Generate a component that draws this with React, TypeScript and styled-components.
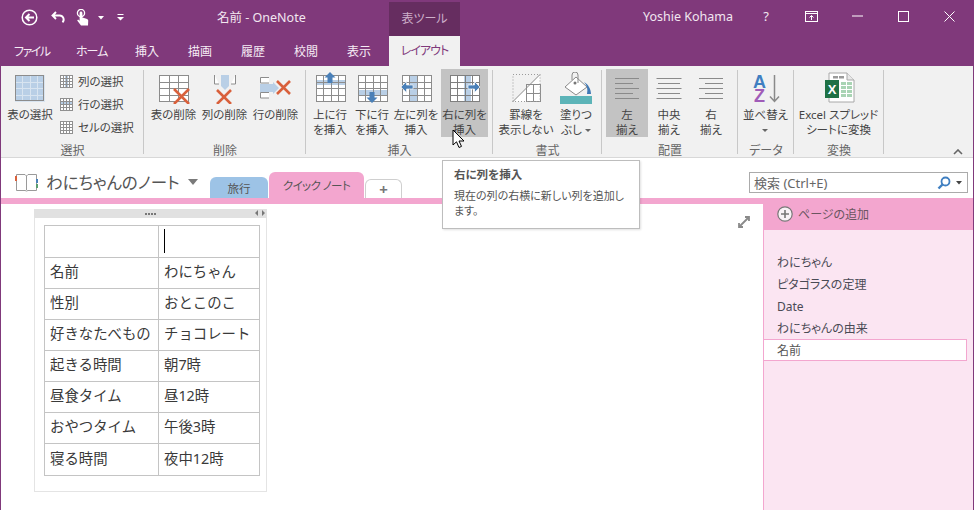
import React from "react";
import styled, { createGlobalStyle } from "styled-components";

const Global = createGlobalStyle`
  html, body { margin: 0; padding: 0; background: #fff; overflow: hidden; }
  * { box-sizing: border-box; }
`;

const PURPLE = "#80397b";
const PINK = "#f3a6cf";
const UI = `"Noto Sans", "Noto Sans CJK JP", sans-serif`;

const Win = styled.div`
  position: relative;
  width: 974px;
  height: 510px;
  border-left: 1px solid ${PURPLE};
  border-right: 1px solid ${PURPLE};
  font-family: ${UI};
  font-feature-settings: "palt";
  color: #444;
  overflow: hidden;
  display: flex;
  flex-direction: column;
`;
const TitleBar = styled.div`
  height: 38px;
  background: ${PURPLE};
  display: flex;
  align-items: center;
  padding-bottom: 6px;
  color: #f2e6f0;
  font-size: 12.5px;
`;
const Qat = styled.div`
  width: 216px;
  margin-top: 3px;
  padding-left: 20px;
  display: flex;
  align-items: center;
  gap: 9px;
`;
const TitleText = styled.div`
  width: 172px;
  font-size: 12.5px;
  white-space: nowrap;
`;
const ContextTab = styled.div`
  width: 71px;
  height: 36px;
  margin: 2px 0 -6px;
  padding-bottom: 4px;
  background: #662d60;
  color: #cdb0ca;
  display: flex;
  align-items: center;
  justify-content: center;
  font-size: 12px;
`;
const UserName = styled.div`
  margin-left: 183px;
  width: 100px;
  white-space: nowrap;
  font-size: 12.5px;
`;
const WinButtons = styled.div`
  display: flex;
  align-items: center;
`;
const WinBtn = styled.div<{ $w: number }>`
  width: ${(p) => p.$w}px;
  display: flex;
  justify-content: center;
  align-items: center;
  font-size: 13px;
`;
const TabBar = styled.div`
  height: 28px;
  background: ${PURPLE};
  display: flex;
  padding-left: 13px;
  color: #f6ecf5;
  font-size: 12px;
`;
const Tab = styled.div<{ $active?: boolean; $w: number; $ls?: number }>`
  width: ${(p) => p.$w}px;
  height: ${(p) => (p.$active ? 30 : 28)}px;
  margin-top: ${(p) => (p.$active ? -2 : 0)}px;
  padding-bottom: 2px;
  display: flex;
  align-items: center;
  justify-content: ${(p) => (p.$active ? "center" : "flex-start")};
  white-space: nowrap;
  letter-spacing: ${(p) => p.$ls ?? 0}px;
  background: ${(p) => (p.$active ? "#f1f1f1" : "transparent")};
  color: ${(p) => (p.$active ? PURPLE : "inherit")};
`;
const Ribbon = styled.div`
  height: 92px;
  background: #f1f1f1;
  border-bottom: 1px solid #d8d8d8;
  display: flex;
  position: relative;
`;
const Group = styled.div<{ $w: number; $pl?: number }>`
  width: ${(p) => p.$w}px;
  position: relative;
  padding-left: ${(p) => p.$pl ?? 0}px;
  padding-top: 3px;
  display: flex;
  align-items: flex-start;
  &::after {
    content: "";
    position: absolute;
    right: 0;
    top: 4px;
    bottom: 3px;
    width: 1px;
    background: #c8c8c8;
  }
`;
const GroupLabel = styled.div`
  position: absolute;
  left: 0;
  right: 0;
  bottom: -2px;
  text-align: center;
  font-size: 12px;
  line-height: 16px;
  color: #666;
`;
const Large = styled.div<{ $w: number; $on?: boolean; $ml?: number }>`
  width: ${(p) => p.$w}px;
  height: 68px;
  margin-left: ${(p) => p.$ml ?? 0}px;
  background: ${(p) => (p.$on ? "#c3c3c3" : "transparent")};
  display: flex;
  flex-direction: column;
  align-items: center;
  padding-top: 3px;
  flex: none;
`;
const Label = styled.div`
  margin-top: 3px;
  font-size: 11.5px;
  line-height: 15px;
  text-align: center;
  white-space: nowrap;
  color: #444;
`;
const SmallList = styled.div`
  margin-left: 5px;
  padding-top: 5px;
  display: flex;
  flex-direction: column;
  gap: 9px;
`;
const SmallItem = styled.div`
  display: flex;
  align-items: center;
  gap: 5px;
  height: 14px;
  font-size: 11.5px;
  white-space: nowrap;
`;
const Collapse = styled.div`
  position: absolute;
  right: 10px;
  bottom: -2px;
  line-height: 0;
`;
const Caret = styled.span<{ $ml?: number }>`
  display: inline-block;
  width: 0;
  height: 0;
  margin-left: ${(p) => p.$ml ?? 3}px;
  vertical-align: middle;
  border-left: 3px solid transparent;
  border-right: 3px solid transparent;
  border-top: 3px solid #666;
`;
const SortSvg = styled.svg`
  display: block;
  flex: none;
  margin-bottom: -4px;
`;
const NoteHeader = styled.div`
  height: 40px;
  background: #fff;
  padding-left: 14px;
  display: flex;
  align-items: flex-end;
`;
const NotebookName = styled.div`
  display: flex;
  align-items: center;
  gap: 8px;
  width: 195px;
  height: 30px;
  margin-bottom: 1px;
  font-size: 16.5px;
  color: #555;
  white-space: nowrap;
`;
const NoteTab = styled.div<{ $bg: string; $w: number; $h: number; $ls?: number }>`
  width: ${(p) => p.$w}px;
  height: ${(p) => p.$h}px;
  background: ${(p) => p.$bg};
  border-radius: 6px 6px 0 0;
  display: flex;
  align-items: center;
  justify-content: center;
  font-size: 11.5px;
  letter-spacing: ${(p) => p.$ls ?? 0}px;
  color: #555;
  margin-right: 1px;
`;
const AddTab = styled(NoteTab)`
  border: 1px solid #cfcfcf;
  border-bottom: none;
  font-size: 15px;
  font-weight: 700;
  color: #777;
`;
const SearchBox = styled.div`
  margin-left: auto;
  margin-right: 5px;
  margin-bottom: 5px;
  width: 219px;
  height: 21px;
  border: 1px solid #ababab;
  display: flex;
  align-items: center;
  padding: 0 5px 0 4px;
  font-size: 13px;
  color: #666;
  justify-content: space-between;
`;
const SearchIcons = styled.div`
  display: flex;
  align-items: center;
  gap: 2px;
`;
const Body = styled.div`
  flex: 1;
  display: flex;
  min-height: 0;
`;
const Page = styled.div`
  flex: 1;
  border-top: 6px solid ${PINK};
  position: relative;
  padding: 5px 0 0 33px;
`;
const Expand = styled.div`
  position: absolute;
  right: 13px;
  top: 12px;
  line-height: 0;
`;
const Widget = styled.div`
  width: 233px;
  height: 283px;
  border: 1px solid #e4e4e4;
  border-top: none;
`;
const Handle = styled.div`
  height: 9px;
  margin: 0 -1px;
  background: #e1e1e1;
  display: flex;
  align-items: center;
  justify-content: center;
  position: relative;
`;
const Dots = styled.div`
  display: flex;
  gap: 1px;
  & > i {
    width: 2px;
    height: 2px;
    background: #777;
    display: block;
  }
`;
const Resize = styled.div`
  position: absolute;
  right: 2px;
  top: 1px;
  line-height: 0;
`;
const Table = styled.table`
  border-collapse: collapse;
  margin: 7px 0 0 9px;
  width: 216px;
  table-layout: fixed;
  font-size: 14.4px;
  font-feature-settings: normal;
  color: #3a3a3a;
`;
const Row = styled.tr<{ $h?: number }>`
  height: ${(p) => p.$h ?? 31}px;
`;
const Cell = styled.td<{ $w?: number }>`
  border: 1px solid #c4c4c4;
  padding: 0 4px 2px 5px;
  width: ${(p) => (p.$w ? `${p.$w}px` : "auto")};
  white-space: nowrap;
  line-height: 20px;
`;
const TextCaret = styled.span`
  display: block;
  width: 1px;
  height: 24px;
  background: #000;
`;
const Side = styled.div`
  width: 210px;
  background: #fbe5f2;
  border-left: 1px solid ${PINK};
  display: flex;
  flex-direction: column;
  color: #555;
  font-size: 12px;
`;
const AddPage = styled.div`
  height: 32px;
  margin-left: -1px;
  background: ${PINK};
  display: flex;
  align-items: center;
  gap: 5px;
  padding-left: 14px;
  color: #6a5560;
  font-size: 12px;
`;
const PageList = styled.div`
  margin-top: 21px;
  display: flex;
  flex-direction: column;
`;
const PageItem = styled.div<{ $sel?: boolean }>`
  height: 22px;
  margin-left: -1px;
  padding-left: 14px;
  display: flex;
  align-items: center;
  white-space: nowrap;
  color: #4a4a55;
  ${(p) =>
    p.$sel
      ? `background:#fff;border:1px solid ${PINK};padding-left:13px;width:204px;color:#555;`
      : ""}
`;
const Tooltip = styled.div`
  position: absolute;
  left: 441px;
  top: 160px;
  width: 198px;
  height: 69px;
  background: #fff;
  border: 1px solid #bdbdbd;
  box-shadow: 1px 1px 2px rgba(0, 0, 0, 0.12);
  padding: 6px 11px;
  color: #555;
  font-size: 11px;
  line-height: 15px;
  white-space: nowrap;
`;
const TipTitle = styled.div`
  font-size: 11.5px;
  font-weight: 700;
  margin-bottom: 6px;
  color: #555;
`;
const Cursor = styled.svg`
  position: absolute;
  left: 451px;
  top: 129px;
`;

/* ---------- drawings ---------- */
const GR = "#8c8c8c";
const HL = "#b9cfe6";
const AR = "#4a80b8";
const XC = "#d9603b";

function Grid({ x, y, w, h, cols, rows, stroke = GR }: { x: number; y: number; w: number; h: number; cols: number; rows: number; stroke?: string }) {
  const lines = [];
  for (let i = 1; i < cols; i++) {
    const px = Math.round(x + (w * i) / cols) + 0.5;
    lines.push(<line key={"c" + i} x1={px} x2={px} y1={y} y2={y + h} />);
  }
  for (let i = 1; i < rows; i++) {
    const py = Math.round(y + (h * i) / rows) + 0.5;
    lines.push(<line key={"r" + i} x1={x} x2={x + w} y1={py} y2={py} />);
  }
  return (
    <g stroke={stroke} strokeWidth="1" fill="none" shapeRendering="crispEdges">
      {lines}
      <rect x={x + 0.5} y={y + 0.5} width={w} height={h} />
    </g>
  );
}
const Ico = ({ children, w = 32, h = 32 }: { children: React.ReactNode; w?: number; h?: number }) => (
  <svg width={w} height={h} viewBox={`0 0 ${w} ${h}`} style={{ display: "block", flex: "none" }}>
    {children}
  </svg>
);
const Cross = ({ x, y, s = 15 }: { x: number; y: number; s?: number }) => (
  <path d={`M${x} ${y}L${x + s} ${y + s}M${x + s} ${y}L${x} ${y + s}`} stroke={XC} strokeWidth="2.6" fill="none" />
);
const White = ({ x }: { x: number }) => <rect x={x} y="3" width="29" height="26" fill="#fff" />;
const SmallGrid = ({ hl }: { hl?: "col" | "row" }) => (
  <Ico w={13} h={13}>
    <rect x="0" y="0" width="12" height="12" fill="#fff" />
    {hl === "col" && <rect x="5" y="1" width="3" height="11" fill={HL} />}
    {hl === "row" && <rect x="1" y="4" width="11" height="3" fill={HL} />}
    <Grid x={0} y={0} w={12} h={12} cols={4} rows={4} stroke="#909090" />
  </Ico>
);
const AlignIcon = ({ mode }: { mode: "l" | "c" | "r" }) => {
  const ys = [6, 11, 16, 21, 26];
  const ws = [24, 18, 24, 18, 24];
  return (
    <Ico>
      {ys.map((y, i) => {
        const w = mode === "c" ? (i % 2 ? 22 : 25) : ws[i];
        const x = mode === "l" ? 4 : mode === "c" ? 16 - w / 2 : 28 - w;
        return <rect key={y} x={x} y={y} width={w} height="1" fill="#8a8a8a" />;
      })}
    </Ico>
  );
};

const App = () => (
  <>
    <Global />
    <Win>
      <TitleBar>
        <Qat>
          <svg width="17" height="17" viewBox="0 0 17 17">
            <circle cx="8.5" cy="8.5" r="7.3" fill="none" stroke="#fff" strokeWidth="1.5" />
            <path d="M13 8.5H5.5M8.5 5L5 8.5L8.5 12" fill="none" stroke="#fff" strokeWidth="2" />
          </svg>
          <svg width="15" height="14" viewBox="0 0 15 14" style={{ marginLeft: 4 }}>
            <path d="M5 1L1.5 4.5L5 8M2 4.5H8.5a4 4 0 0 1 3 6.8" fill="none" stroke="#fff" strokeWidth="1.9" />
          </svg>
          <svg width="13" height="17" viewBox="0 0 13 17" style={{ marginLeft: 1 }}>
            <circle cx="5" cy="4" r="3.6" fill="none" stroke="#fff" strokeWidth="1.3" />
            <path d="M3.6 4a1.4 1.4 0 0 1 2.8 0v4.5l4 1.2c1.6.5 2 1.4 1.8 2.6L12 16.5H5L1.2 11.5l.9-.9 1.5 1.2z" fill="#fff" />
          </svg>
          <svg width="6" height="4" viewBox="0 0 6 4"><path d="M0 0H6L3 3.5Z" fill="#fff" /></svg>
          <svg width="7" height="7" viewBox="0 0 7 7" style={{ marginLeft: 4 }}>
            <rect x="0.5" y="0" width="6" height="1" fill="#fff" />
            <path d="M0 3H7L3.5 6.5Z" fill="#fff" />
          </svg>
        </Qat>
        <TitleText>名前 - OneNote</TitleText>
        <ContextTab>表ツール</ContextTab>
        <UserName>Yoshie Kohama</UserName>
        <WinButtons>
          <WinBtn $w={46}>?</WinBtn>
          <WinBtn $w={44}>
            <svg width="13" height="11" viewBox="0 0 13 11">
              <rect x="0.5" y="0.5" width="12" height="10" fill="none" stroke="#fff" />
              <path d="M0 2.5H13" stroke="#fff" />
              <path d="M6.5 9V4.5M4.5 6.5L6.5 4.5L8.5 6.5" stroke="#fff" fill="none" />
            </svg>
          </WinBtn>
          <WinBtn $w={48}><svg width="11" height="2" viewBox="0 0 11 2"><rect y="0.5" width="11" height="1" fill="#fff" /></svg></WinBtn>
          <WinBtn $w={45}><svg width="11" height="11" viewBox="0 0 11 11"><rect x="0.5" y="0.5" width="10" height="10" fill="none" stroke="#fff" /></svg></WinBtn>
          <WinBtn $w={46}><svg width="11" height="11" viewBox="0 0 11 11"><path d="M0.5 0.5L10.5 10.5M10.5 0.5L0.5 10.5" stroke="#fff" fill="none" /></svg></WinBtn>
        </WinButtons>
      </TitleBar>
      <TabBar>
        <Tab $w={62} $ls={-1.5}>ファイル</Tab>
        <Tab $w={59} $ls={-1}>ホーム</Tab>
        <Tab $w={53}>挿入</Tab>
        <Tab $w={53}>描画</Tab>
        <Tab $w={53}>履歴</Tab>
        <Tab $w={53}>校閲</Tab>
        <Tab $w={42}>表示</Tab>
        <Tab $w={71} $active $ls={-1}>レイアウト</Tab>
      </TabBar>
      <Ribbon>
        <Group $w={143} $pl={4}>
          <Large $w={50}>
            <Ico>
              <rect x="1" y="3" width="29" height="26" fill={HL} />
              <Grid x={1} y={3} w={29} h={26} cols={4} rows={4} stroke="#d8e4f0" />
              <rect x="1.5" y="3.5" width="28" height="25" fill="none" stroke={GR} />
            </Ico>
            <Label>表の選択</Label>
          </Large>
          <SmallList>
            <SmallItem><SmallGrid hl="col" />列の選択</SmallItem>
            <SmallItem><SmallGrid hl="row" />行の選択</SmallItem>
            <SmallItem><SmallGrid />セルの選択</SmallItem>
          </SmallList>
          <GroupLabel>選択</GroupLabel>
        </Group>
        <Group $w={162} $pl={4}>
          <Large $w={51}>
            <Ico>
              <White x={1} />
              <Grid x={1} y={3} w={29} h={26} cols={3} rows={4} />
              <Cross x={16} y={17} s={15} />
            </Ico>
            <Label>表の削除</Label>
          </Large>
          <Large $w={51}>
            <Ico>
              <path d="M5.5 3V12H10M26.5 3V12H22" fill="#fff" stroke={GR} />
              <path d="M12 3H20V14L16 18L12 14Z" fill={HL} />
              <Cross x={8} y={18} s={14} />
            </Ico>
            <Label>列の削除</Label>
          </Large>
          <Large $w={51}>
            <Ico>
              <path d="M9 5.5H0.5V11H9M9 20.5H0.5V26H9" fill="#fff" stroke={GR} />
              <path d="M0 12H13V10L19 16L13 22V20H0Z" fill={HL} />
              <Cross x={17} y={9} s={13} />
            </Ico>
            <Label>行の削除</Label>
          </Large>
          <GroupLabel>削除</GroupLabel>
        </Group>
        <Group $w={187} $pl={3}>
          <Large $w={42}>
            <Ico>
              <White x={2} />
              <rect x="2" y="8" width="29" height="5" fill={HL} />
              <Grid x={2} y={3} w={29} h={26} cols={4} rows={4} />
              <path d="M16 0L21.5 5.5H18.5V11H13.5V5.5H10.5Z" fill={AR} />
            </Ico>
            <Label>上に行<br />を挿入</Label>
          </Large>
          <Large $w={42}>
            <Ico>
              <White x={2} />
              <rect x="2" y="18" width="29" height="5" fill={HL} />
              <Grid x={2} y={3} w={29} h={26} cols={4} rows={4} />
              <path d="M16 31L21.5 25.5H18.5V20H13.5V25.5H10.5Z" fill={AR} />
            </Ico>
            <Label>下に行<br />を挿入</Label>
          </Large>
          <Large $w={46}>
            <Ico>
              <White x={2} />
              <rect x="10" y="3" width="7" height="26" fill={HL} />
              <Grid x={2} y={3} w={29} h={26} cols={4} rows={4} />
              <path d="M1 15L6.5 9.5V13H13V17H6.5V20.5Z" fill={AR} stroke="#f1f1f1" strokeWidth=".7" />
            </Ico>
            <Label>左に列を<br />挿入</Label>
          </Large>
          <Large $w={47} $ml={2} $on>
            <Ico>
              <White x={1} />
              <rect x="15" y="3" width="7" height="26" fill={HL} />
              <Grid x={1} y={3} w={29} h={26} cols={4} rows={4} stroke="#7f7f7f" />
              <path d="M31 15L25.5 9.5V13H19V17H25.5V20.5Z" fill={AR} stroke="#fff" strokeWidth=".7" />
            </Ico>
            <Label>右に列を<br />挿入</Label>
          </Large>
          <GroupLabel>挿入</GroupLabel>
        </Group>
        <Group $w={109} $pl={8}>
          <Large $w={50}>
            <Ico>
              <path d="M30 3L3 29.5H30Z" fill="#fff" />
              <Grid x={16} y={12} w={14} h={17} cols={2} rows={2} />
              <path d="M3 2.5H30V29.5H3Z" fill="none" stroke="#9a9a9a" strokeDasharray="1 2" />
              <path d="M30 2.5L2.5 30" stroke={GR} fill="none" />
            </Ico>
            <Label>罫線を<br />表示しない</Label>
          </Large>
          <Large $w={50}>
            <Ico>
              <path d="M5 15L16 5L27 15L16 23Z" fill="#fff" stroke="#8a8a8a" />
              <path d="M12 8V3a3 3 0 0 1 6 0V11" fill="none" stroke="#8a8a8a" />
              <circle cx="15" cy="11" r="1.5" fill="#777" />
              <path d="M24 10C28 12 31 17 31 22H27C28 17 27 13 24 10Z" fill="#3f78b5" />
              <rect x="0" y="24" width="32" height="8" fill="#5cb4b8" />
            </Ico>
            <Label>塗りつ<br />ぶし<Caret /></Label>
          </Large>
          <GroupLabel>書式</GroupLabel>
        </Group>
        <Group $w={136} $pl={4}>
          <Large $w={42} $on>
            <AlignIcon mode="l" />
            <Label>左<br />揃え</Label>
          </Large>
          <Large $w={42}>
            <AlignIcon mode="c" />
            <Label>中央<br />揃え</Label>
          </Large>
          <Large $w={42}>
            <AlignIcon mode="r" />
            <Label>右<br />揃え</Label>
          </Large>
          <GroupLabel>配置</GroupLabel>
        </Group>
        <Group $w={56}>
          <Large $w={55}>
            <SortSvg width="32" height="36" viewBox="0 0 32 36">
              <text x="3" y="16" fontSize="18" fontWeight="700" fill="#3f7fc1" fontFamily="Liberation Sans, sans-serif">A</text>
              <text x="4" y="30" fontSize="18" fontWeight="700" fill="#a05cb8" fontFamily="Liberation Sans, sans-serif">Z</text>
              <path d="M24.5 3V29M20 24.5L24.5 29.5L29 24.5" fill="none" stroke="#8a8a8a" strokeWidth="1.5" />
            </SortSvg>
            <Label>並べ替え<br /><Caret $ml={0} /></Label>
          </Large>
          <GroupLabel>データ</GroupLabel>
        </Group>
        <Group $w={90}>
          <Large $w={89}>
            <Ico>
              <path d="M6 1H24L31 8V30H6Z" fill="#fff" stroke="#a8a8a8" />
              <path d="M24 1V8H31" fill="#e8e8e8" stroke="#a8a8a8" />
              <rect x="10" y="4" width="5" height="2.5" fill="#9a9a9a" />
              <rect x="16" y="4" width="5" height="2.5" fill="#9a9a9a" />
              <g fill="#a9d4b4">
                <rect x="18" y="10" width="5" height="3" /><rect x="24" y="10" width="5" height="3" />
                <rect x="18" y="14" width="5" height="3" /><rect x="24" y="14" width="5" height="3" />
                <rect x="18" y="18" width="5" height="3" /><rect x="24" y="18" width="5" height="3" />
                <rect x="18" y="22" width="5" height="3" /><rect x="24" y="22" width="5" height="3" />
              </g>
              <rect x="2" y="8" width="14" height="18" fill="#1e7145" />
              <text x="9" y="22" textAnchor="middle" fontSize="13" fontWeight="700" fill="#fff" fontFamily="Liberation Sans, sans-serif">X</text>
            </Ico>
            <Label>Excel スプレッド<br />シートに変換</Label>
          </Large>
          <GroupLabel>変換</GroupLabel>
        </Group>
        <Collapse>
          <svg width="10" height="6" viewBox="0 0 10 6" style={{ marginBottom: 4 }}>
            <path d="M1 5L5 1L9 5" fill="none" stroke="#666" strokeWidth="1.6" />
          </svg>
        </Collapse>
      </Ribbon>
      <NoteHeader>
        <NotebookName>
          <svg width="23" height="19" viewBox="0 0 23 19" style={{ flex: "none" }}>
            <path d="M1.5 1.5H10L11.5 3L13 1.5H21.5V17.5H13L11.5 18L10 17.5H1.5Z" fill="#fff" stroke="#9a9a9a" />
            <path d="M11.5 3V17" stroke="#9a9a9a" />
            <rect x="0" y="3" width="2" height="5" fill="#d9603b" />
            <rect x="21" y="6" width="2" height="4" fill="#4a80b8" />
            <rect x="21" y="11" width="2" height="4" fill="#5a9e6f" />
          </svg>
          わにちゃんのノート
          <svg width="10" height="6" viewBox="0 0 10 6" style={{ flex: "none" }}>
            <path d="M0 0H10L5 6Z" fill="#7a7a7a" />
          </svg>
        </NotebookName>
        <NoteTab $bg="#9dc3e6" $w={58} $h={21}>旅行</NoteTab>
        <NoteTab $bg={PINK} $w={95} $h={26} $ls={-0.6}>クイック ノート</NoteTab>
        <AddTab $bg="#fff" $w={37} $h={19}>+</AddTab>
        <SearchBox>
          検索 (Ctrl+E)
          <SearchIcons>
            <svg width="14" height="14" viewBox="0 0 14 14">
              <circle cx="8.5" cy="5.5" r="4" fill="none" stroke="#3f7fc1" strokeWidth="1.8" />
              <path d="M5.5 8.5L1.5 12.5" stroke="#3f7fc1" strokeWidth="2.4" />
            </svg>
            <svg width="6" height="4" viewBox="0 0 6 4" style={{ marginLeft: 3 }}><path d="M0 0H6L3 3.5Z" fill="#444" /></svg>
          </SearchIcons>
        </SearchBox>
      </NoteHeader>
      <Body>
        <Page>
          <Widget>
            <Handle>
              <Dots><i /><i /><i /><i /></Dots>
              <Resize>
                <svg width="10" height="6" viewBox="0 0 10 6">
                  <path d="M3 0V6L0 3ZM7 0V6L10 3Z" fill="#777" />
                </svg>
              </Resize>
            </Handle>
            <Table>
              <tbody>
                <Row $h={32}><Cell $w={114} /><Cell><TextCaret /></Cell></Row>
                <Row><Cell>名前</Cell><Cell>わにちゃん</Cell></Row>
                <Row><Cell>性別</Cell><Cell>おとこのこ</Cell></Row>
                <Row><Cell>好きなたべもの</Cell><Cell>チョコレート</Cell></Row>
                <Row><Cell>起きる時間</Cell><Cell>朝7時</Cell></Row>
                <Row><Cell>昼食タイム</Cell><Cell>昼12時</Cell></Row>
                <Row><Cell>おやつタイム</Cell><Cell>午後3時</Cell></Row>
                <Row $h={32}><Cell>寝る時間</Cell><Cell>夜中12時</Cell></Row>
              </tbody>
            </Table>
          </Widget>
          <Expand>
            <svg width="12" height="12" viewBox="0 0 12 12">
              <path d="M7 1H11V5M5 11H1V7M11 1L1 11" fill="none" stroke="#8a8a8a" strokeWidth="1.8" />
            </svg>
          </Expand>
        </Page>
        <Side>
          <AddPage>
            <svg width="16" height="16" viewBox="0 0 16 16" style={{ flex: "none" }}>
              <circle cx="8" cy="8" r="7.2" fill="#f8f2f6" stroke="#777" strokeWidth="1.2" />
              <path d="M8 4V12M4 8H12" stroke="#777" strokeWidth="1.6" />
            </svg>
            ページの追加
          </AddPage>
          <PageList>
            <PageItem>わにちゃん</PageItem>
            <PageItem>ピタゴラスの定理</PageItem>
            <PageItem>Date</PageItem>
            <PageItem>わにちゃんの由来</PageItem>
            <PageItem $sel>名前</PageItem>
          </PageList>
        </Side>
      </Body>
      <Tooltip>
        <TipTitle>右に列を挿入</TipTitle>
        現在の列の右横に新しい列を追加し<br />ます。
      </Tooltip>
      <Cursor width="13" height="21" viewBox="0 0 13 21">
        <path d="M1 1V16L4.5 12.8L7 18.5L9.5 17.4L7 12H12Z" fill="#fff" stroke="#000" strokeWidth="1" />
      </Cursor>
    </Win>
  </>
);

export default App;
